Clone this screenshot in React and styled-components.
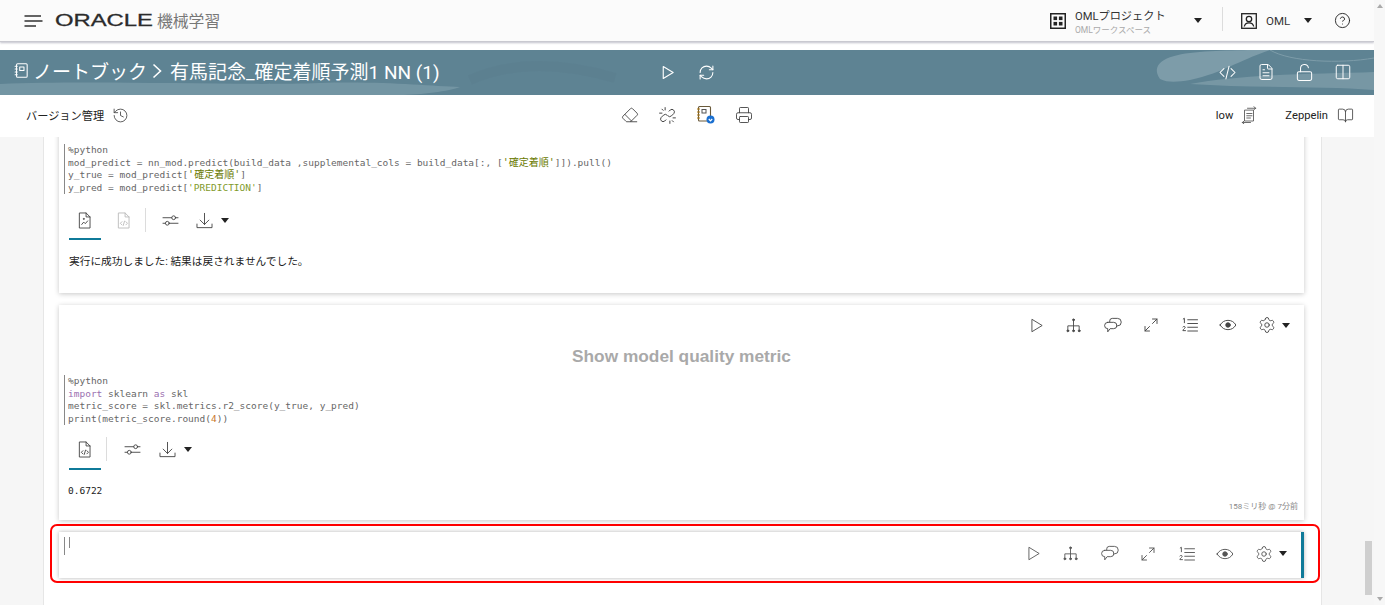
import React from 'react';
import styled, { createGlobalStyle } from 'styled-components';
import { RefreshCw, Eraser, Printer, FileText, LockOpen, Columns2, History, BookOpen, Settings, CircleHelp } from 'lucide-react';

const UI_FONT = `Roboto, "Noto Sans CJK JP", sans-serif`;
const CODE_FONT = `"DejaVu Sans Mono", "Noto Sans CJK JP", monospace`;

const GlobalStyle = createGlobalStyle`
  html, body { margin: 0; padding: 0; background: #fff; overflow: hidden; }
  * { box-sizing: border-box; }
`;

const Svg = ({ size = 18, color = '#444', width = 1.2, children }) => (
  <svg width={size} height={size} viewBox="0 0 24 24" fill="none" stroke={color} strokeWidth={width} strokeLinecap="round" strokeLinejoin="round">
    {children}
  </svg>
);

const Caret = styled.span`
  display: inline-block;
  flex: none;
  width: 0;
  height: 0;
  margin-left: ${p => p.$left || 0}px;
  border-left: 4.5px solid transparent;
  border-right: 4.5px solid transparent;
  border-top: 5px solid #222;
`;

const MenuIcon = () => (
  <svg width="19" height="12" viewBox="0 0 19 12" fill="none" stroke="#333" strokeWidth="1.3">
    <path d="M0.5 1H17M0.5 6H18.5M0.5 11H12" />
  </svg>
);
const GridIcon = () => (
  <svg width="16" height="16" viewBox="0 0 16 16" fill="none">
    <rect x="0.75" y="0.75" width="14.5" height="14.5" stroke="#222" strokeWidth="1.5" />
    <rect x="3.5" y="3.5" width="3.6" height="3.6" fill="#222" />
    <rect x="8.9" y="3.5" width="3.6" height="3.6" fill="#222" />
    <rect x="3.5" y="8.9" width="3.6" height="3.6" fill="#222" />
    <rect x="8.9" y="8.9" width="3.6" height="3.6" fill="#222" />
  </svg>
);
const PersonIcon = () => (
  <svg width="16" height="16" viewBox="0 0 16 16" fill="none" stroke="#222" strokeWidth="1.3">
    <rect x="0.7" y="0.7" width="14.6" height="14.6" />
    <circle cx="8" cy="6" r="2.7" />
    <path d="M3.3 13.5c.5-2.6 2.4-3.7 4.7-3.7s4.2 1.1 4.7 3.7" />
  </svg>
);
const NotebookIcon = () => (
  <Svg size={17} color="#fff" width={1.5}>
    <rect x="5" y="2.5" width="15" height="19" rx="1.5" />
    <rect x="9.5" y="7" width="6" height="5" />
    <path d="M3 6h3M3 10h3M3 14h3M3 18h3" />
  </Svg>
);
const Chevron = () => (
  <svg width="10" height="16" viewBox="0 0 10 16" fill="none" stroke="#fff" strokeWidth="1.6">
    <path d="M1.5 1.5 8.5 8l-7 6.5" />
  </svg>
);
const PlayIcon = ({ color, width = 1.25 }) => (
  <Svg size={17} color={color} width={width}>
    <path d="M6 3.5 20 12 6 20.5z" />
  </Svg>
);
const CodeTagIcon = () => (
  <Svg size={19} color="#fff" width={1.3}>
    <path d="M7.5 7 2.5 12l5 5M16.5 7l5 5-5 5M14 4l-4 16" />
  </Svg>
);
const BrokenLink = () => (
  <Svg size={19} color="#444" width={1.25}>
    <path d="M14 6.5l1.5-1.5a3.2 3.2 0 0 1 4.5 4.5L17 12.5a3.2 3.2 0 0 1-4.5 0" />
    <path d="M10 17.5 8.5 19A3.2 3.2 0 0 1 4 14.5L7 11.5a3.2 3.2 0 0 1 4.5 0" />
    <path d="M9 2v3M2 9h3M15 19v3M19 15h3M5 4l1.5 1.5M18 18.5l1.5 1.5" />
  </Svg>
);
const NotebookBadge = () => (
  <svg width="20" height="20" viewBox="0 0 20 20" fill="none">
    <rect x="2.5" y="1.5" width="12" height="14.5" rx="1" stroke="#6a5a3a" strokeWidth="1.1" />
    <rect x="6" y="4.5" width="4" height="3.5" stroke="#555" strokeWidth="1" />
    <path d="M1 4h3M1 7h3M1 10h3M1 13h3" stroke="#b07a10" strokeWidth="1" />
    <circle cx="14.5" cy="14.5" r="4" fill="#1a6fd0" />
    <path d="M12.8 14 14.5 15.8 16.2 14" stroke="#fff" strokeWidth="1.2" />
  </svg>
);
const SwapIcon = () => (
  <Svg size={18} color="#555" width={1.15}>
    <path d="M6 6v14h12V6z" />
    <path d="M9 10h7M9 13h7M9 16h5" />
    <path d="M10 3h11M18.5 1l2.5 2-2.5 2M3 22h11M5.5 20 3 22l2.5 2" />
  </Svg>
);
const ResultFile = ({ color = '#444' }) => (
  <Svg size={19} color={color} width={1.15}>
    <path d="M6 2.5h8l5 5v14H6z" />
    <path d="M14 2.5v5h5" />
    <path d="M8.5 17l2.5-3 2 2 3-3.5" />
    <circle cx="11" cy="10" r=".6" />
  </Svg>
);
const CodeFile = ({ color = '#444' }) => (
  <Svg size={19} color={color} width={1.15}>
    <path d="M6 2.5h8l5 5v14H6z" />
    <path d="M14 2.5v5h5" />
    <path d="M10 13.5 8 15.5l2 2M15 13.5l2 2-2 2M13.3 12.8l-1.6 5.4" />
  </Svg>
);
const SlidersIcon = () => (
  <Svg size={19} color="#444" width={1.15}>
    <path d="M2.5 8.5h11M18.5 8.5h3M2.5 15.5h3M10.5 15.5h11" />
    <circle cx="16" cy="8.5" r="2.4" />
    <circle cx="8" cy="15.5" r="2.4" />
  </Svg>
);
const DownloadIcon = () => (
  <Svg size={19} color="#444" width={1.15}>
    <path d="M12 3v14M6.5 11.5 12 17l5.5-5.5M2.5 16.5V21h19v-4.5" />
  </Svg>
);
const TreeIcon = ({ color }) => (
  <Svg size={17} color={color} width={1.25}>
    <circle cx="12" cy="4" r="1.3" fill={color} />
    <path d="M12 5v13M4 18v-5.5h16V18" />
    <circle cx="4" cy="19.5" r="1.3" fill={color} />
    <circle cx="12" cy="19.5" r="1.3" fill={color} />
    <circle cx="20" cy="19.5" r="1.3" fill={color} />
  </Svg>
);
const BubblesIcon = ({ color }) => (
  <Svg size={19} color={color} width={1.15}>
    <path d="M8.5 7.500V6.2A3.2 3.2 0 0 1 11.7 3h6.6a3.2 3.2 0 0 1 0 9.500H17" />
    <path d="M6 8h7.500a3.500 3.500 0 0 1 0 8H9l-3 4v-4a4 4 0 0 1 0-8z" />
  </Svg>
);
const ExpandIcon = ({ color }) => (
  <Svg size={18} color={color} width={1.25}>
    <path d="M4 20 10 14M14 10l6-6M14 4h6v6M4 14v6h6" />
  </Svg>
);
const NumberedIcon = ({ color }) => (
  <Svg size={18} color={color} width={1.25}>
    <path d="M9 5h13M9 10h13M9 15h13M9 20h13" />
    <path d="M3 4l1.500-1v6M2.500 14.500c.5-1 3.500-1 3 1-.3 1-3 2.500-3 4h3.500" />
  </Svg>
);
const EyeIcon = ({ color }) => (
  <Svg size={18} color={color} width={1.25}>
    <path d="M1.500 12C4 7.800 7.500 5.800 12 5.800S20 7.800 22.500 12C20 16.200 16.500 18.200 12 18.200S4 16.200 1.500 12z" />
    <circle cx="12" cy="12" r="3" fill={color} />
  </Svg>
);

const Page = styled.div`
  position: relative;
  display: flex;
  width: 1385px;
  height: 605px;
  overflow: hidden;
  font-family: ${UI_FONT};
  background: #fff;
`;

const Shell = styled.div`
  display: flex;
  flex-direction: column;
  width: 1374px;
`;

const OuterScroll = styled.div`
  display: flex;
  flex-direction: column;
  justify-content: space-between;
  align-items: center;
  width: 11px;
  padding: 4px 0;
  background: #f7f7f7;
`;

const ScrollArrow = styled.span`
  width: 0;
  height: 0;
  border-left: 3px solid transparent;
  border-right: 3px solid transparent;
  border-${p => (p.$down ? 'top' : 'bottom')}: 4px solid #aaa;
`;

const Header = styled.header`
  display: flex;
  align-items: center;
  flex: none;
  height: 42px;
  padding: 0 23px 0 24px;
  background: #fbfbfb;
  border-bottom: 1px solid #c9c9d0;
  box-shadow: 0 1px 2px rgba(120, 120, 140, 0.45);
`;

const LogoWord = styled.span`
  display: inline-block;
  width: 98px;
  margin-left: 12px;
  font-family: "Liberation Sans", sans-serif;
  font-size: 17px;
  line-height: 17px;
  white-space: nowrap;
  color: #2b2b2b;
  -webkit-text-stroke: 0.3px #2b2b2b;
  transform: scaleX(1.4);
  transform-origin: left center;
`;

const AppName = styled.span`
  margin-left: 4px;
  font-size: 15.8px;
  color: #777;
  flex: 1;
`;

const Project = styled.div`
  display: flex;
  flex-direction: column;
  width: 119px;
  margin-left: 9px;
  padding-top: 3px;
`;

const ProjectName = styled.span`
  font-size: 11.2px;
  line-height: 15px;
  color: #333;
`;

const ProjectSub = styled.span`
  font-size: 8.5px;
  line-height: 12px;
  color: #aaa;
`;

const VDivider = styled.span`
  flex: none;
  width: 1px;
  height: 24px;
  margin: ${p => p.$margin || '0'};
  background: #dcdcdc;
`;

const UserName = styled.span`
  width: 38px;
  margin-left: 9px;
  font-size: 11.5px;
  color: #333;
`;

const HelpWrap = styled.span`
  display: flex;
  margin-left: 22px;
`;

const Banner = styled.div`
  position: relative;
  display: grid;
  grid-template-columns: 1fr auto 1fr;
  align-items: center;
  flex: none;
  height: 45px;
  margin-top: 8px;
  padding: 0 13px 1px;
  background: #5e8393;
  color: #fff;
  overflow: hidden;
`;

const BannerArt = styled.svg`
  position: absolute;
  inset: 0;
`;

const Title = styled.div`
  position: relative;
  display: flex;
  align-items: center;
  padding-bottom: 3px;
  font-size: 19px;
  white-space: nowrap;
`;

const TitlePart = styled.span`
  margin: 0 ${p => p.$gap || 0}px 0 ${p => p.$left || 0}px;
`;

const IconRow = styled.div`
  position: relative;
  display: flex;
  align-items: center;
  justify-content: ${p => (p.$end ? 'flex-end' : 'flex-start')};
  gap: ${p => p.$gap}px;
  padding-right: ${p => p.$inset || 0}px;
`;

const ActionBar = styled.div`
  display: grid;
  grid-template-columns: 1fr auto 1fr;
  align-items: center;
  flex: none;
  height: 42px;
  padding: 0 20px 2px;
  background: #fff;
`;

const ActionText = styled.span`
  display: inline-flex;
  align-items: center;
  gap: ${p => p.$gap || 8}px;
  margin-left: ${p => p.$left || 0}px;
  font-size: 11.2px;
  color: #222;
  justify-self: start;
`;

const EndGroup = styled.div`
  display: flex;
  justify-content: flex-end;
  align-items: center;
`;

const Workspace = styled.div`
  display: flex;
  flex: 1;
  min-height: 0;
  background: #f6f6f6;
`;

const Gutter = styled.div`
  flex: none;
  width: ${p => p.$w}px;
  position: relative;
`;

const InnerThumb = styled.div`
  position: absolute;
  right: 2px;
  bottom: 10px;
  width: 7px;
  height: 54px;
  background: #cfcfcf;
`;

const Paper = styled.main`
  position: relative;
  display: flex;
  flex-direction: column;
  gap: 12px;
  flex: none;
  width: 1279px;
  padding: 0 17px 0 15px;
  background: #fff;
  border-left: 1px solid #e6e6e6;
  border-right: 1px solid #e6e6e6;
  overflow: hidden;
`;

const Card = styled.section`
  position: relative;
  flex: none;
  height: ${p => p.$h}px;
  margin-top: ${p => p.$top || 0}px;
  padding-top: ${p => p.$pad || 0}px;
  background: #fff;
  box-shadow: 0 1px 5px rgba(0, 0, 0, 0.22);
`;

const Code = styled.div`
  margin: ${p => p.$top || 0}px 0 0 5px;
  padding-left: 3px;
  border-left: 1px solid #888;
  font-family: ${CODE_FONT};
  font-size: 9.5px;
  line-height: 12.5px;
  color: #666;
`;

const CodeLine = styled.div`
  white-space: pre;
  height: 12.5px;
`;

const Tok = styled.span`
  color: ${p => p.$c};
`;

const CjkTok = styled(Tok)`
  font-size: 10px;
`;

const Tabs = styled.div`
  display: flex;
  align-items: center;
  height: ${p => p.$h || 36}px;
  margin-top: ${p => p.$top}px;
  padding-left: 16px;
`;

const TabSpace = styled.span`
  flex: none;
  width: ${p => p.$w}px;
`;

const TabDivider = styled(VDivider)`
  margin: 0 ${p => p.$right}px 0 ${p => p.$left}px;
`;

const ActiveBar = styled.div`
  width: 32px;
  height: 2px;
  margin-left: 10px;
  background: #0f7a99;
`;

const Message = styled.p`
  margin: 14px 0 0 10px;
  font-size: 10.7px;
  line-height: 16px;
  color: #222;
`;

const Output = styled.div`
  margin: 15px 0 0 9px;
  font-family: ${CODE_FONT};
  font-size: 9.5px;
  line-height: 12px;
  color: #222;
`;

const Timing = styled.div`
  margin: 4px 6px 0 0;
  text-align: right;
  font-size: 8px;
  line-height: 12px;
  color: #888;
`;

const CellTools = styled.div`
  display: flex;
  align-items: center;
  justify-content: flex-end;
  gap: 20.5px;
  height: 18px;
  padding-right: ${p => p.$right || 0}px;
`;

const Heading = styled.h2`
  margin: 13px 0 0;
  text-align: center;
  font-family: "Liberation Sans", sans-serif;
  font-size: 17.3px;
  line-height: 18px;
  font-weight: 700;
  color: #a9a9a9;
`;

const CellCaret = styled(Caret)`
  margin-left: -14px;
`;

const EmptyCell = styled.section`
  position: relative;
  flex: none;
  display: flex;
  align-items: center;
  justify-content: space-between;
  height: 46px;
  padding: 0 0 3px 5px;
  background: #fff;
  border-right: 3px solid #0f7a99;
  box-shadow: 0 0 4px rgba(0, 0, 0, 0.3);
`;

const Cursor = styled.div`
  display: flex;
  align-items: flex-start;
  gap: 4px;
  height: 38px;
  padding-top: 2px;
`;

const CursorLine = styled.span`
  width: 1px;
  height: ${p => p.$h}px;
  background: #888;
`;

const Highlight = styled.div`
  position: absolute;
  left: 6px;
  right: 1px;
  top: 387px;
  height: 59px;
  border: 2px solid #f00;
  border-radius: 7px;
  pointer-events: none;
`;

const cellIcons = color => (
  <>
    <PlayIcon color={color} />
    <TreeIcon color={color} />
    <BubblesIcon color={color} />
    <ExpandIcon color={color} />
    <NumberedIcon color={color} />
    <EyeIcon color={color} />
    <Settings size={18} strokeWidth={1.2} color={color} />
    <CellCaret />
  </>
);

export default function App() {
  return (
    <Page>
      <GlobalStyle />
      <Shell>
        <Header>
          <MenuIcon />
          <LogoWord>ORACLE</LogoWord>
          <AppName>機械学習</AppName>
          <GridIcon />
          <Project>
            <ProjectName>OMLプロジェクト</ProjectName>
            <ProjectSub>OMLワークスペース</ProjectSub>
          </Project>
          <Caret />
          <VDivider $margin="0 18px 4px 20px" />
          <PersonIcon />
          <UserName>OML</UserName>
          <Caret />
          <HelpWrap><CircleHelp size={17} strokeWidth={1.3} color="#222" /></HelpWrap>
        </Header>

        <Banner>
          <BannerArt width="1374" height="45" viewBox="0 0 1374 45">
            <path d="M0 34C100 30 240 36 320 33 380 31 430 36 460 37 450 41 420 45 400 45H0z" fill="#7b9ba8" opacity=".75" />
            <path d="M1160 29C1150 14 1165 6 1190 3 1215 0 1250 0 1270 0 1235 12 1225 22 1190 30 1178 32 1168 33 1160 29z" fill="#7d9ca9" />
            <path d="M1190 34C1240 24 1320 24 1374 22V40C1320 36 1250 38 1190 34z" fill="#7d9ca9" opacity=".8" />
            <path d="M1270 0C1290 12 1340 14 1374 8" stroke="#7d9ca9" fill="none" />
            <path d="M470 30C510 12 560 12 615 28" stroke="#587b8a" strokeWidth="10" fill="none" opacity=".3" />
          </BannerArt>
          <Title>
            <NotebookIcon />
            <TitlePart $left={3} $gap={5}>ノートブック</TitlePart>
            <Chevron />
            <TitlePart $left={8}>有馬記念_確定着順予測1 NN (1)</TitlePart>
          </Title>
          <IconRow $gap={22}>
            <PlayIcon color="#fff" width={1.6} />
            <RefreshCw size={17} strokeWidth={1.5} color="#fff" />
          </IconRow>
          <IconRow $gap={20} $end $inset={9}>
            <CodeTagIcon />
            <FileText size={18} strokeWidth={1.3} color="#fff" />
            <LockOpen size={19} strokeWidth={1.3} color="#fff" />
            <Columns2 size={18} strokeWidth={1.3} color="#fff" />
          </IconRow>
        </Banner>

        <ActionBar>
          <ActionText $left={6} $gap={8}>
            バージョン管理
            <History size={17} strokeWidth={1.2} color="#444" />
          </ActionText>
          <IconRow $gap={19}>
            <Eraser size={18} strokeWidth={1.2} color="#444" />
            <BrokenLink />
            <NotebookBadge />
            <Printer size={18} strokeWidth={1.2} color="#444" />
          </IconRow>
          <EndGroup>
            <ActionText $gap={7}>
              low
              <SwapIcon />
            </ActionText>
            <ActionText $left={27} $gap={9}>
              Zeppelin
              <BookOpen size={17} strokeWidth={1.2} color="#444" />
            </ActionText>
          </EndGroup>
        </ActionBar>

        <Workspace>
          <Gutter $w={43} />
          <Paper>
            <Card $top={-8} $h={164} $pad={15}>
              <Code>
                <CodeLine>%python</CodeLine>
                <CodeLine>
                  mod_predict = nn_mod.predict(build_data ,supplemental_cols = build_data[:, [
                  <CjkTok $c="#6a7a00">'確定着順'</CjkTok>
                  ]]).pull()
                </CodeLine>
                <CodeLine>
                  y_true = mod_predict[
                  <CjkTok $c="#6a7a00">'確定着順'</CjkTok>
                  ]
                </CodeLine>
                <CodeLine>
                  y_pred = mod_predict[
                  <Tok $c="#7f9a2a">'PREDICTION'</Tok>
                  ]
                </CodeLine>
              </Code>
              <Tabs $top={8}>
                <ResultFile />
                <TabSpace $w={20} />
                <CodeFile color="#bbb" />
                <TabDivider $left={12} $right={15} />
                <SlidersIcon />
                <TabSpace $w={15} />
                <DownloadIcon />
                <Caret $left={7} />
              </Tabs>
              <ActiveBar />
              <Message>実行に成功しました: 結果は戻されませんでした。</Message>
            </Card>

            <Card $h={215} $pad={11}>
              <CellTools $right={14}>{cellIcons('#444')}</CellTools>
              <Heading>Show model quality metric</Heading>
              <Code $top={10}>
                <CodeLine>%python</CodeLine>
                <CodeLine>
                  <Tok $c="#9a6fb0">import</Tok> sklearn <Tok $c="#9a6fb0">as</Tok> skl
                </CodeLine>
                <CodeLine>metric_score = skl.metrics.r2_score(y_true, y_pred)</CodeLine>
                <CodeLine>
                  print(metric_score.round(<Tok $c="#c9772b">4</Tok>))
                </CodeLine>
              </Code>
              <Tabs $top={5} $h={38}>
                <CodeFile />
                <TabDivider $left={12} $right={16} />
                <SlidersIcon />
                <TabSpace $w={16} />
                <DownloadIcon />
                <Caret $left={7} />
              </Tabs>
              <ActiveBar />
              <Output>0.6722</Output>
              <Timing>158ミリ秒 @ 7分前</Timing>
            </Card>

            <EmptyCell>
              <Cursor>
                <CursorLine $h={18} />
                <CursorLine $h={11} />
              </Cursor>
              <CellTools $right={14}>{cellIcons('#555')}</CellTools>
            </EmptyCell>

            <Highlight />
          </Paper>
          <Gutter $w={52}>
            <InnerThumb />
          </Gutter>
        </Workspace>
      </Shell>
      <OuterScroll>
        <ScrollArrow />
        <ScrollArrow $down />
      </OuterScroll>
    </Page>
  );
}
